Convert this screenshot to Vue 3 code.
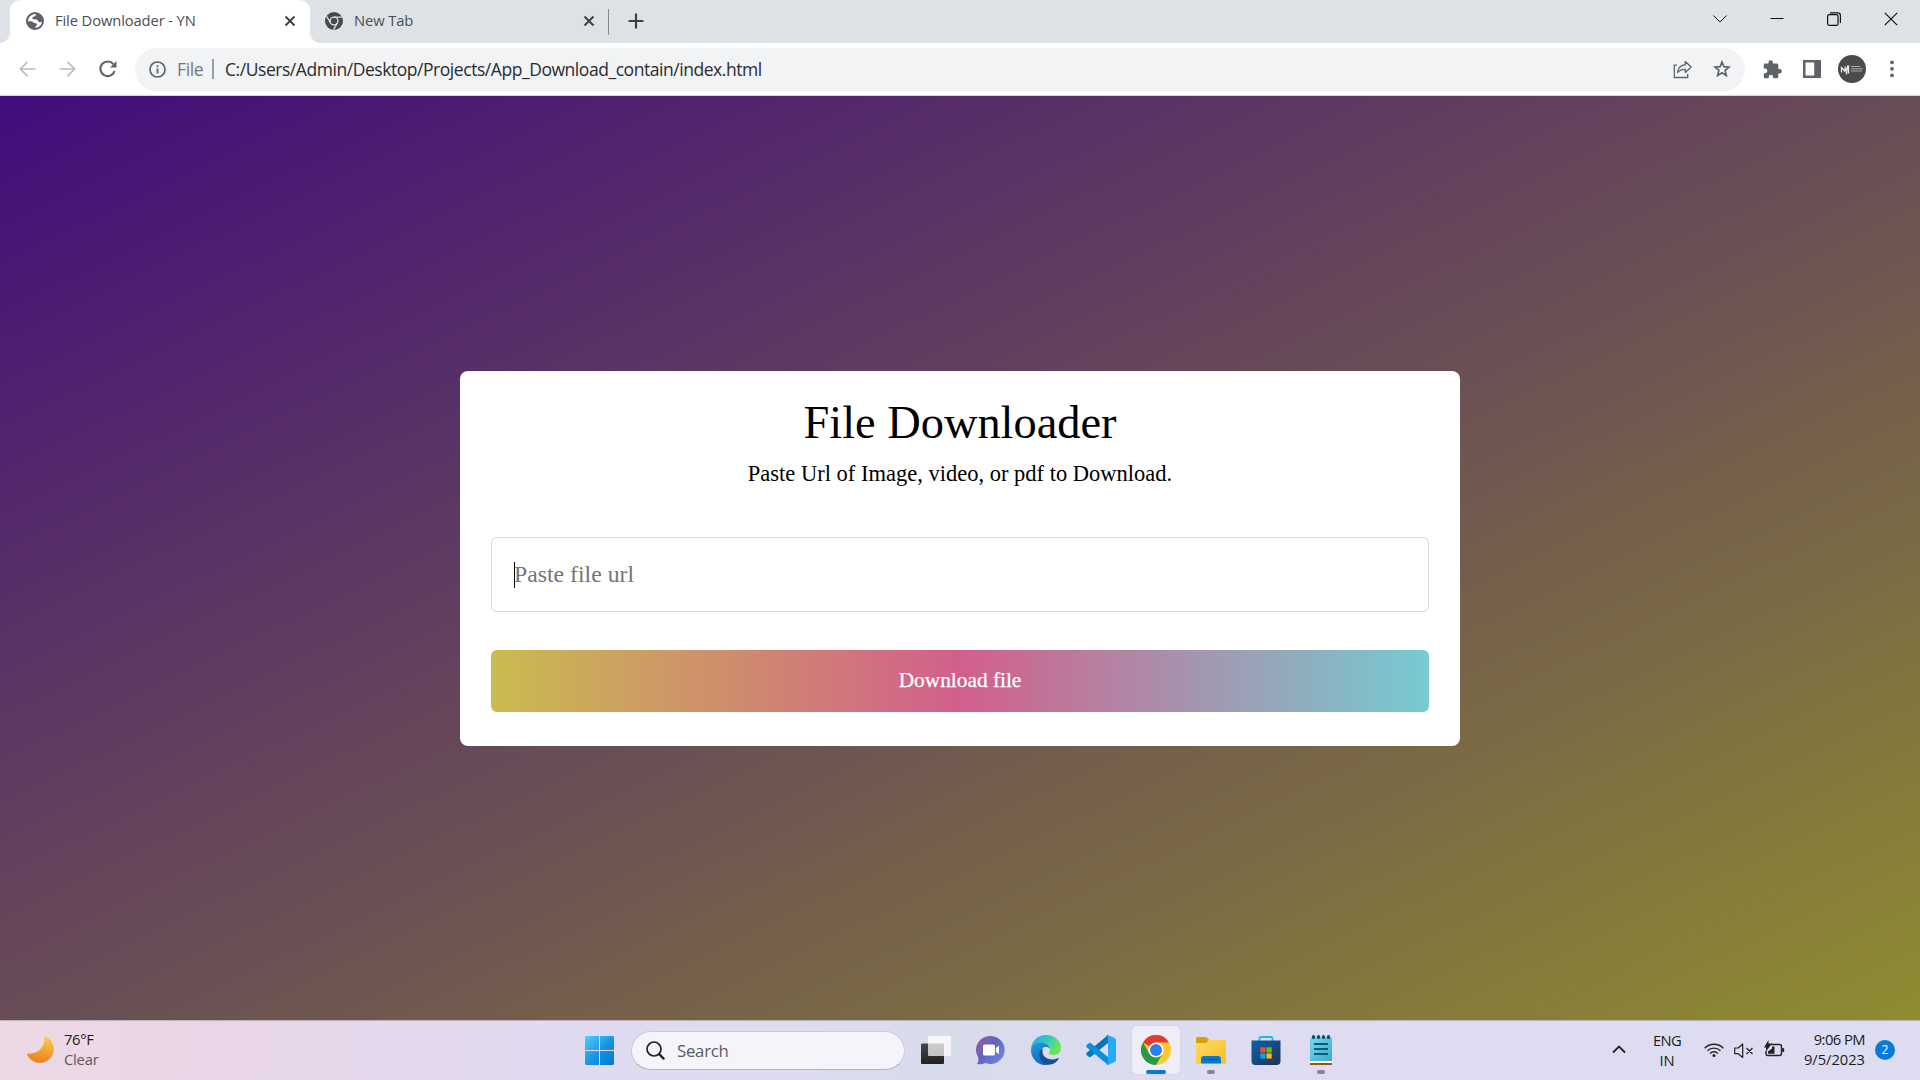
<script setup>
const leftTabs = [
  { title: 'File Downloader - YN', active: true },
  { title: 'New Tab', active: false },
]
</script>

<template>
  <div class="screen">
    <header class="tabs">
      <div v-for="tab in leftTabs" :key="tab.title" class="tab" :class="{ active: tab.active }">
        <svg v-if="tab.active" class="fav" width="18" height="18" viewBox="0 0 18 18">
          <circle cx="9" cy="9" r="9" fill="#5f6368" />
          <path d="M2 8C3 4.500 6 2 9.800 2L9.500 3.700C8.800 4.600 7.400 4.500 6.600 5.200 6 6.200 6.400 7.200 7.600 7.300L10.600 7.500C12 8 11.800 9.700 13.300 10.200L16 10C15.400 13.300 13 15.600 9.600 16 9.300 14.500 9.800 13.900 10.900 13.200 11.300 11.500 10.300 11 9 10.900L7.600 10.700C6.800 9.600 6 9.200 4.600 9.200H2Z" fill="#fff" />
        </svg>
        <svg v-else class="fav" width="18" height="18" viewBox="0 0 18 18">
          <circle cx="9" cy="9" r="9" fill="#474a4d" />
          <circle cx="9" cy="9" r="3.900" fill="none" stroke="#dee1e6" stroke-width="1.300" />
          <path d="M9 5.100H17M5.600 11 1.700 4.300M12.400 11 8.500 17.700" stroke="#dee1e6" stroke-width="1.300" />
        </svg>
        <span class="tab-title">{{ tab.title }}</span>
        <svg class="tab-x" width="12" height="12" viewBox="0 0 12 12"><path d="m1.500 1.500 9 9m0-9-9 9" stroke="#3c4043" stroke-width="1.900" /></svg>
      </div>
      <i class="tab-sep"></i>
      <svg class="plus" width="16" height="16" viewBox="0 0 16 16"><path d="M8 .5v15M.5 8h15" stroke="#3c4043" stroke-width="2.200" /></svg>
      <div class="win">
        <svg width="14" height="14" viewBox="0 0 14 14"><path d="m.5 3.500 6.500 6.500 6.500-6.500" stroke-width="1" /></svg>
        <svg width="14" height="14" viewBox="0 0 14 14"><path d="M.5 6.500h13" stroke-width="1" /></svg>
        <svg width="14" height="14" viewBox="0 0 14 14"><rect x=".6" y="2.700" width="10.400" height="10.600" rx="1.500" /><path d="M3 .8h7.600c1.600 0 2.800 1.200 2.800 2.700v7.500" /></svg>
        <svg width="14" height="14" viewBox="0 0 14 14"><path d="m.8.8 12.400 12.400m0-12.400L.8 13.200" /></svg>
      </div>
    </header>

    <div class="toolbar">
      <svg class="nav" width="18" height="18" viewBox="0 0 18 18"><path d="M17.500 9H2.500m7-7.200L2.300 9l7.200 7.200" stroke="#babcbe" /></svg>
      <svg class="nav" width="18" height="18" viewBox="0 0 18 18"><path d="M1.500 9h15M9.500 1.800 16.700 9l-7.200 7.200" stroke="#babcbe" /></svg>
      <svg class="nav reload" width="18" height="18" viewBox="0 0 18 18"><path d="M15.600 11.200A7.300 7.300 0 1 1 14.400 4.200" stroke="#5f6368" stroke-width="2.100" /><path d="M17.500 1v6.500H11Z" fill="#5f6368" /></svg>
      <div class="omnibox">
        <svg width="17" height="17" viewBox="0 0 17 17"><circle cx="8.500" cy="8.500" r="7.500" fill="none" stroke="#5f6368" stroke-width="1.700" /><path d="M8.500 7.500v5M8.500 4.300v1.900" stroke="#5f6368" stroke-width="1.800" /></svg>
        <span class="scheme">File</span>
        <i class="bar"></i>
        <span class="url">C:/Users/Admin/Desktop/Projects/App_Download_contain/index.html</span>
        <svg class="share" width="20" height="19" viewBox="0 0 20 19" fill="none" stroke="#5f6368" stroke-width="1.300"><path d="M4 5.200H1.300v12.300h13.400v-3.700" /><path d="M12.300 1.600 18.200 7l-5.900 5.400V9.300c-3.400-.1-5.800.8-7.800 3.200.6-4.400 3.200-7.300 7.800-7.800Z" stroke-linejoin="round" /></svg>
        <svg class="star" width="18" height="18" viewBox="0 0 18 18"><path d="m9 2 1.900 4.700 5.100.4-3.900 3.300 1.200 5L9 12.700l-4.300 2.700 1.200-5L2 7.100l5.100-.4Z" fill="none" stroke="#5f6368" stroke-width="1.700" /></svg>
      </div>
      <svg class="ext" width="19" height="19" viewBox="0 0 19 19"><path d="M16.600 9h-1.300V5.200c0-.9-.7-1.600-1.600-1.600H9.900V2.400a2.200 2.200 0 0 0-4.400 0v1.200H2.200C1.300 3.600.8 4.300.8 5.200v3.200H2a2.400 2.400 0 0 1 0 4.800H.8v3.500c0 .9.500 1.500 1.400 1.500h3.500V17a2.200 2.200 0 0 1 4.400 0v1.200h3.600c.9 0 1.600-.6 1.600-1.500v-3.300h1.300a2.200 2.200 0 0 0 0-4.400Z" fill="#5f6368" /></svg>
      <svg class="side" width="18" height="18" viewBox="0 0 18 18"><path d="M0 0h18v18H0Z" fill="#5f6368" /><path d="M2.500 2.500h8.700v13H2.500Z" fill="#fff" /></svg>
      <svg class="avatar" width="28" height="28" viewBox="0 0 28 28"><circle cx="14" cy="14" r="14" fill="#4b4b4b" /><path d="M3.500 17.500v-5l3.500 4v-5m1.500 8 1-9m-2 5 3.500-5m-.500 1v7M7 14h4" stroke="#eee" stroke-width="1.200" fill="none" /><path d="M13 11.500h9M13 13.800h12M13 16h11" stroke="#aaa" stroke-width="1" /></svg>
      <svg class="dots" width="4" height="18" viewBox="0 0 4 18" fill="#5f6368"><circle cx="2" cy="2.300" r="1.900" /><circle cx="2" cy="8.800" r="1.900" /><circle cx="2" cy="15.300" r="1.900" /></svg>
    </div>

    <main class="page">
      <section class="card">
        <h1>File Downloader</h1>
        <p>Paste Url of Image, video, or pdf to Download.</p>
        <div class="field"><i class="caret"></i><span>Paste file url</span></div>
        <button type="button">Download file</button>
      </section>
    </main>

    <footer class="taskbar">
      <div class="weather">
        <svg width="28" height="28" viewBox="0 0 28 28">
          <defs><linearGradient id="moon" x1=".6" y1="0" x2=".4" y2="1"><stop offset="0" stop-color="#f8cf4d" /><stop offset="1" stop-color="#ee7c1b" /></linearGradient></defs>
          <path d="M18.500.5C30 6 31 20 21 26 13.500 30 4.500 27.500.5 18.800 12 19.500 20 12 18.500.5Z" fill="url(#moon)" />
        </svg>
        <div class="lines"><span class="temp">76°F</span><span class="cond">Clear</span></div>
      </div>

      <div class="apps">
        <svg class="start" width="29" height="29" viewBox="0 0 29 29">
          <defs><linearGradient id="win" x1="0" y1="0" x2="1" y2="1" gradientUnits="objectBoundingBox"><stop offset="0" stop-color="#4dd0ff" /><stop offset=".55" stop-color="#1593e0" /><stop offset="1" stop-color="#0076d4" /></linearGradient></defs>
          <path d="M1 0h13v14H0V1Zm14 0h13l1 1v13H15ZM0 15h14v14H1l-1-1Zm15 0h14v13l-1 1H15Z" fill="url(#win)" />
        </svg>
        <div class="search">
          <svg width="19" height="19" viewBox="0 0 19 19" fill="none" stroke="#222" stroke-linecap="round"><circle cx="8" cy="8" r="7" stroke-width="1.700" /><path d="m13.400 13.400 4.200 4.200" stroke-width="2.300" /></svg>
          <span>Search</span>
        </div>
        <svg class="app" width="30" height="28" viewBox="0 0 30 28">
          <defs><linearGradient id="tv" x1="0" y1="0" x2="0" y2="1"><stop offset="0" stop-color="#474747" /><stop offset="1" stop-color="#202020" /></linearGradient></defs>
          <rect x="0" y="7.500" width="23" height="20.500" rx="1" fill="url(#tv)" /><rect x="7" y="0" width="23" height="20" rx="1" fill="#fff" opacity=".72" /><path d="M23 0h6l1 1v18l-1 1h-6Z" fill="#f7f7f7" opacity=".6" />
        </svg>
        <svg class="app" width="30" height="30" viewBox="0 0 30 30">
          <defs><linearGradient id="chat" x1="0" y1="0" x2="1" y2=".8"><stop offset="0" stop-color="#9b6099" /><stop offset=".5" stop-color="#6560c4" /><stop offset="1" stop-color="#6c8ae3" /></linearGradient></defs>
          <path d="M15 1a14 14 0 1 1-5.500 27c-3 1.600-6 1.300-8.500 1 1.500-2 1.800-4.500 1-7A14 14 0 0 1 15 1Z" fill="url(#chat)" /><rect x="7" y="9.500" width="12" height="11" rx="1.500" fill="#fff" /><path d="m20 13 3-2.200v8.400L20 17Z" fill="#fff" />
        </svg>
        <svg class="app" width="30" height="30" viewBox="0 0 30 30">
          <defs>
            <linearGradient id="e1" x1="0" y1="0" x2="1" y2=".4"><stop offset="0" stop-color="#25a4dc" /><stop offset=".5" stop-color="#31c6cb" /><stop offset="1" stop-color="#68e657" /></linearGradient>
            <linearGradient id="e2" x1="0" y1="0" x2=".6" y2="1"><stop offset="0" stop-color="#269bdc" /><stop offset="1" stop-color="#0c67bd" /></linearGradient>
          </defs>
          <path d="M0 14C.5 6 7 0 15 0c9 0 15 6 15 12.500 0 5-3.500 7.500-7.500 7.500-3.500 0-5.300-1.300-4-3 1.800-3-.5-6.500-5-7C8 9.500 2 10.500 0 14Z" fill="url(#e1)" />
          <path d="M0 15C1 9.500 6 7.300 11 8c4.500.5 7.500 3 7.500 6-2-3-5.500-3-7.500 0-3 5-1 12 7 15.500C8 32 0 24.500 0 15Z" fill="url(#e2)" />
          <path d="M11.500 13.400C7 16 7.500 24 12 27.500c5 4 12 2.500 15.500-3.500.3-.8-.2-1.200-1-.8-6 3-14.500.5-15-6.200Z" fill="#164f9b" />
        </svg>
        <svg class="app" width="30" height="30" viewBox="0 0 30 30">
          <path d="M22 0v8L5 21.800c-.8.700-1.600.6-2.300 0L.7 20c-.7-.700-.6-1.500 0-2.200Z" fill="#0877b9" /><path d="M22 30v-8L5 8.200c-.8-.7-1.600-.6-2.300 0L.7 10c-.7.700-.6 1.500 0 2.200Z" fill="#0991d8" /><path d="m22 0 7 3.300q1 .5 1 1.700v20q0 1.200-1 1.700L22 30c-1 .3-1.500 0-2.500-.8 1.200.6 2.500 0 2.500-1.500V2.300C22 .8 20.700.2 19.500.8 20.500 0 21.200-.2 22 0Z" fill="#29a9f3" />
        </svg>
        <div class="slot current">
          <svg class="app" width="30" height="30" viewBox="0 0 30 30">
            <circle cx="15" cy="15" r="15" fill="#fdc82d" /><path d="M15 15 2 7.500A15 15 0 0 1 28 7.500H15Z" fill="#e23b30" /><path d="M2 7.500A15 15 0 0 0 15 30l6.500-11.300L15 15l-6.500 3.700Z" fill="#279b49" /><circle cx="15" cy="15" r="7.600" fill="#fff" /><circle cx="15" cy="15" r="6" fill="#2f7cec" />
          </svg>
          <i class="mark"></i>
        </div>
        <div class="slot">
          <svg class="app" width="30" height="30" viewBox="0 0 30 30">
            <defs><linearGradient id="fold" x1="0" y1="0" x2="1" y2="1"><stop offset="0" stop-color="#ffdc69" /><stop offset="1" stop-color="#f9bd20" /></linearGradient></defs>
            <path d="M0 3.500Q0 2 1.500 2H10l3.500 3L11 9H0Z" fill="#df9d06" /><path d="M0 8h10l3-3h15.500Q30 5 30 6.500V28.500H0Z" fill="url(#fold)" /><path d="M5 28.500V24q0-3 3-3h14q3 0 3 3v4.500Z" fill="#0a79ce" /><path d="M8 24.500h14" stroke="#075ba0" stroke-width="1.300" />
          </svg>
          <i class="mark"></i>
        </div>
        <svg class="app store" width="30" height="30" viewBox="0 0 30 30">
          <defs><linearGradient id="bag" x1="0" y1="0" x2="1" y2="1"><stop offset="0" stop-color="#0a61a9" /><stop offset="1" stop-color="#253354" /></linearGradient></defs>
          <path d="M8.500 6V3.500q0-1.500 1.500-1.500h10q1.500 0 1.500 1.500V6" fill="none" stroke="#27b5ef" stroke-width="1.800" /><path d="M.5 5.500h29V26q0 4-4 4h-21q-4 0-4-4Z" fill="url(#bag)" /><path d="M9.300 12.300h5.200v5.200H9.300Z" fill="#f25022" /><path d="M15.500 12.300h5.200v5.200h-5.200Z" fill="#7fba00" /><path d="M9.300 18.400h5.200v5.200H9.300Z" fill="#00a4ef" /><path d="M15.500 18.400h5.200v5.200h-5.200Z" fill="#ffb900" />
        </svg>
        <div class="slot">
          <svg class="app" width="24" height="30" viewBox="0 0 24 30">
            <defs><linearGradient id="note" x1="0" y1="0" x2="1" y2="1"><stop offset="0" stop-color="#7ad8ea" /><stop offset="1" stop-color="#3ba9cc" /></linearGradient></defs>
            <path d="M1 28h22v2H1Z" fill="#a1520c" /><path d="M1 26h22v2H1Z" fill="#fff" /><path d="M1 4q0-2 2-2h18q2 0 2 2v22H1Z" fill="url(#note)" /><path d="M5 9h14M5 14h14M5 19h14" stroke="#075d7b" stroke-width="1.900" /><path d="M4.500 1.700v.8m5-.8v.8m5-.8v.8m5-.8v.8" stroke="#07516d" stroke-width="3.200" stroke-linecap="round" />
          </svg>
          <i class="mark"></i>
        </div>
      </div>

      <div class="tray">
        <svg class="chev" width="14" height="9" viewBox="0 0 14 9"><path d="m1 7.500 6-6 6 6" fill="none" stroke="#222" stroke-width="1.800" /></svg>
        <div class="lang"><span class="eng">ENG</span><span>IN</span></div>
        <svg class="wifi" width="20" height="16" viewBox="0 0 20 16" fill="none" stroke="#222" stroke-width="1.400"><path d="M.7 6.200a13 13 0 0 1 18.600 0M3.500 8.800a9.200 9.200 0 0 1 13 0M6.100 11.400a5.500 5.500 0 0 1 7.800 0" /><circle cx="10" cy="13.600" r="1.500" fill="#222" stroke="none" /></svg>
        <svg class="vol" width="20" height="16" viewBox="0 0 20 16" fill="none" stroke="#222" stroke-width="1.200"><path d="M.7 5h3.500L8.700 1v13.500L4.200 10.700H.7ZM12.500 5l6 6m0-6-6 6" stroke-linejoin="round" /></svg>
        <svg class="bat" width="21" height="17" viewBox="0 0 21 17"><path d="M7 4.500h8.500q2 0 2 2v7q0 2-2 2H4q-2 0-2-2V11" fill="none" stroke="#222" stroke-width="1.400" /><path d="M18.200 8h1q1 0 1 1v2q0 1-1 1h-1ZM8 6.500h2.500v7.300H4V11.500L8 8.500ZM4.500 0v3.500H8L2 11.500V7.500H0Z" fill="#222" /></svg>
        <div class="clock"><span class="time">9:06 PM</span><span class="date">9/5/2023</span></div>
        <b class="count">2</b>
      </div>
    </footer>
  </div>
</template>

<style>
html,
body {
  margin: 0;
  overflow: hidden;
}
</style>

<style scoped>
* { box-sizing: border-box; }
svg { display: block; flex: none; }
i { display: block; flex: none; }
.screen {
  width: 1920px;
  height: 1080px;
  display: flex;
  flex-direction: column;
  font-family: "Open Sans", "Noto Sans", sans-serif;
  white-space: nowrap;
}
.tabs {
  height: 43px;
  background: #dee1e6;
  display: flex;
  padding-left: 10px;
}
.tab {
  width: 300px;
  height: 43px;
  padding: 0 14px 1px 16px;
  display: flex;
  align-items: center;
  font-size: 14.750px;
  letter-spacing: -0.120px;
  color: #4b4f53;
}
.tab.active {
  position: relative;
  background: #fff;
  border-radius: 10px 10px 0 0;
}
.tab.active::before,
.tab.active::after {
  content: "";
  position: absolute;
  bottom: 0;
  width: 10px;
  height: 10px;
}
.tab.active::before { left: -10px; background: radial-gradient(circle at 0 0, transparent 9.5px, #fff 10px); }
.tab.active::after { right: -10px; background: radial-gradient(circle at 100% 0, transparent 9.5px, #fff 10px); }
.tab:not(.active) { width: 298px; padding-left: 15px; }
.tab:not(.active) .tab-x { margin-right: -1px; }
.tab-title { margin-left: 11px; padding-bottom: 2px; }
.tab-x { margin-left: auto; }
.tab-sep { width: 1px; height: 26px; margin-top: 9px; background: #85888c; }
.plus { margin: 13px 0 0 19px; }
.win {
  margin: 12px 22px 0 auto;
  display: flex;
  gap: 43px;
}
.win svg { fill: none; stroke: #111; stroke-width: 1.200; }
.toolbar {
  height: 53px;
  background: #fff;
  border-bottom: 1px solid #d8d8dc;
  display: flex;
  align-items: center;
  padding-left: 18px;
}
.nav { margin-right: 22px; fill: none; stroke-width: 1.700; }
.reload { margin-left: 1px; margin-right: 21px; }
.omnibox {
  width: 1610px;
  height: 43px;
  margin-left: -3px;
  border-radius: 22px;
  background: #f1f3f4;
  display: flex;
  align-items: center;
  padding-left: 14px;
  font-size: 17.500px;
}
.scheme { margin-left: 11px; width: 35px; color: #74787d; letter-spacing: -0.400px; }
.bar { width: 2px; height: 20px; background: #9a9da1; margin-right: 11px; }
.url { color: #2b2c2f; letter-spacing: -0.450px; }
.share { margin-left: auto; }
.star { margin: 0 14px 0 20px; }
.ext { margin-left: 18px; }
.side { margin-left: 21px; }
.avatar { margin-left: 17px; }
.dots { margin-left: 24px; }
.page {
  height: 924px;
  background: linear-gradient(to bottom right, #420c7c, #8f8c31);
  display: flex;
  justify-content: center;
  align-items: flex-start;
  padding-top: 275px;
  font-family: "Liberation Serif", serif;
}
.card {
  width: 1000px;
  height: 375px;
  padding: 26px 31px 0;
  border-radius: 8px;
  background: #fff;
  display: flex;
  flex-direction: column;
  text-align: center;
}
h1 { margin: 0; font-weight: 400; font-size: 46.400px; line-height: 52px; }
p { margin: 12px 0 0; font-size: 22.500px; line-height: 26px; }
.field {
  height: 75px;
  margin-top: 50px;
  border: 1px solid #d9d9d9;
  border-radius: 6px;
  display: flex;
  align-items: center;
  padding-left: 22px;
  font-size: 23.750px;
  color: #757575;
}
.caret { width: 1px; height: 26px; background: #000; margin-right: -1px; }
button {
  height: 62px;
  margin-top: 38px;
  padding: 0 0 2px;
  border: 0;
  border-radius: 6px;
  background: linear-gradient(to right, #cbbb4f, #d25f8c, #76cbd1);
  color: #fff;
  font: 21.350px "Liberation Serif", serif;
  -webkit-text-stroke: 0.250px #fff;
}
.taskbar {
  height: 60px;
  border-top: 1px solid #b9b0b8;
  background: linear-gradient(90deg, #eedae5 0, #ead5e8 200px, #e0daf0 560px, #dedbf1 760px, #d8dcea 960px, #dddcf1 1200px, #dddcf0 1920px);
  display: flex;
  color: #1c1c1e;
  font-size: 14.750px;
}
.weather { width: 584px; display: flex; padding: 14px 0 0 26px; }
.lines { margin-left: 10px; margin-top: -6px; display: flex; flex-direction: column; line-height: 20px; }
.temp { letter-spacing: -0.350px; }
.cond { color: #5d5660; letter-spacing: -0.200px; }
.apps { width: 1012px; display: flex; align-items: center; padding-bottom: 1px; }
.apps .start { margin-left: 1px; }
.search {
  width: 274px;
  height: 39px;
  margin: 0 16px 0 17px;
  border: 1px solid #cdc8de;
  border-bottom-color: #b3b0c4;
  border-radius: 20px;
  background: #f5f4fa;
  display: flex;
  align-items: center;
  padding-left: 14px;
  font-size: 16.800px;
  color: #5c5b60;
}
.search span { margin-left: 12px; letter-spacing: -0.250px; }
.apps > .app { margin-right: 25px; }
.apps > .store { margin: 0 16px 0 9px; }
.slot {
  position: relative;
  width: 48px;
  height: 48px;
  margin: 0 7px 0 0;
  border-radius: 5px;
  display: flex;
  align-items: center;
  justify-content: center;
}
.current { margin-left: -9px; background: #efeef8; box-shadow: 0 0 1px 1px #d9d6e8; }
.mark { position: absolute; bottom: 0; left: 20px; width: 8px; height: 4px; border-radius: 2px; background: #858492; }
.current .mark { left: 14px; width: 20px; background: #087ad6; }
.tray { display: flex; width: 324px; padding-top: 9px; }
.chev { margin: 15px 0 0 16px; }
.lang { width: 36px; margin-left: 23px; text-align: center; line-height: 20px; display: flex; flex-direction: column; }
.eng { letter-spacing: -0.600px; }
.wifi { margin: 12px 0 0 19px; }
.vol { margin: 13px 0 0 10px; }
.bat { margin: 10px 0 0 10px; }
.clock { width: 64px; margin: -1px 10px 0 16px; display: flex; flex-direction: column; align-items: flex-end; line-height: 20px; }
.time { letter-spacing: -0.550px; }
.date { letter-spacing: -0.050px; }
.count {
  width: 20px;
  height: 20px;
  margin-top: 10px;
  border-radius: 50%;
  background: #077bd7;
  color: #fff;
  font-size: 12px;
  font-weight: 400;
  line-height: 19px;
  text-align: center;
}
</style>
